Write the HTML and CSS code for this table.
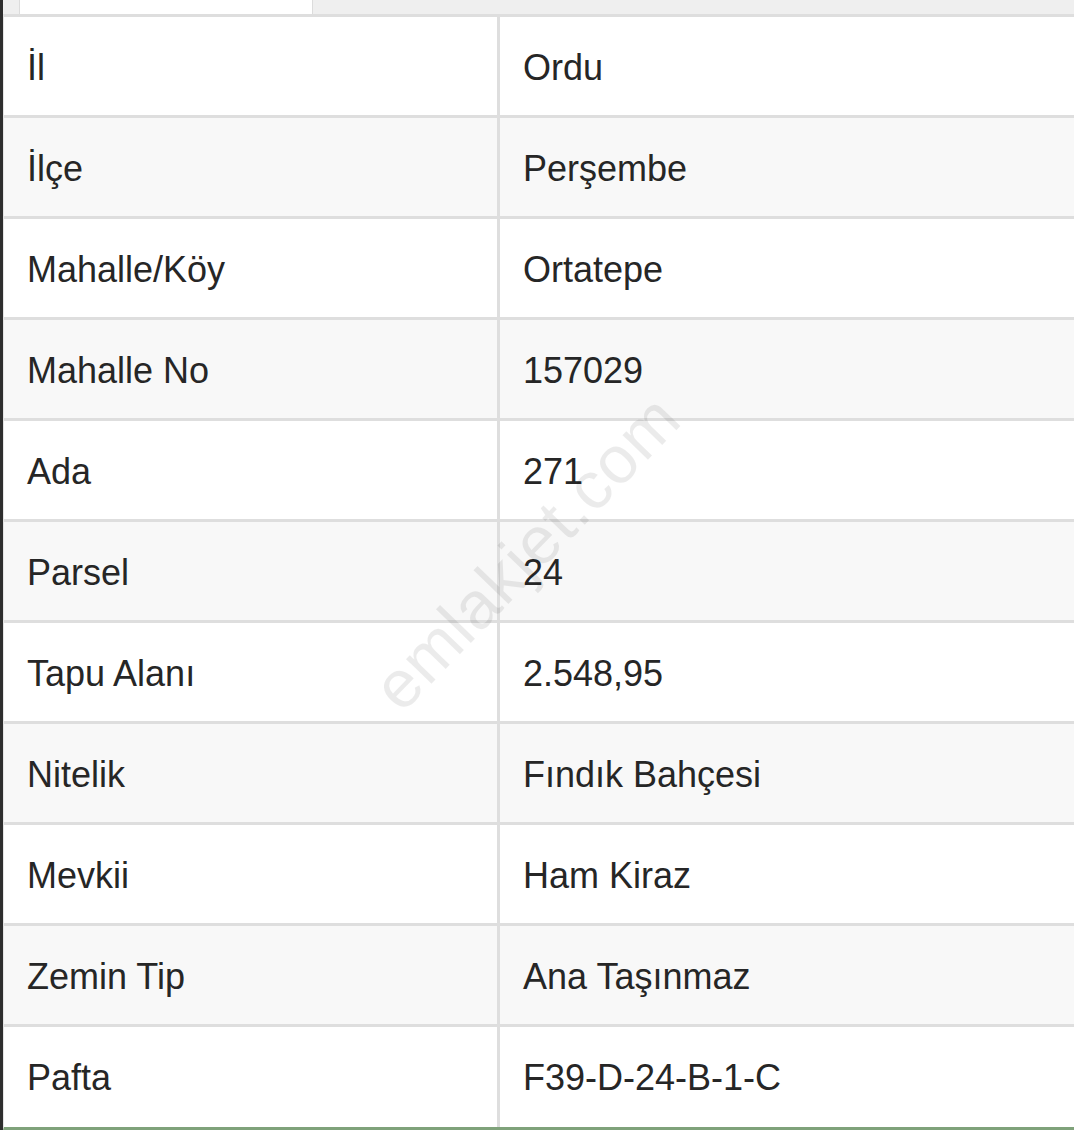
FILE: index.html
```html
<!DOCTYPE html>
<html lang="tr">
<head>
<meta charset="utf-8">
<link rel="stylesheet" href="styles.css">
</head>
<body>
<div class="page">
  <div class="tabs">
    <div class="tab"></div>
  </div>
  <div class="table">
    <div class="row"><div class="cell">İl</div><div class="cell">Ordu</div></div>
    <div class="row"><div class="cell">İlçe</div><div class="cell">Perşembe</div></div>
    <div class="row"><div class="cell">Mahalle/Köy</div><div class="cell">Ortatepe</div></div>
    <div class="row"><div class="cell">Mahalle No</div><div class="cell">157029</div></div>
    <div class="row"><div class="cell">Ada</div><div class="cell">271</div></div>
    <div class="row"><div class="cell">Parsel</div><div class="cell">24</div></div>
    <div class="row"><div class="cell">Tapu Alanı</div><div class="cell">2.548,95</div></div>
    <div class="row"><div class="cell">Nitelik</div><div class="cell">Fındık Bahçesi</div></div>
    <div class="row"><div class="cell">Mevkii</div><div class="cell">Ham Kiraz</div></div>
    <div class="row"><div class="cell">Zemin Tip</div><div class="cell">Ana Taşınmaz</div></div>
    <div class="row last"><div class="cell">Pafta</div><div class="cell">F39-D-24-B-1-C</div></div>
    <div class="watermark">emlakjet.com</div>
  </div>
</div>
</body>
</html>
```

FILE: styles.css
```css
html, body {
  margin: 0;
  padding: 0;
  background: #ffffff;
  overflow: hidden;
}

.page {
  border-left: 3px solid #2e2e2e;
  height: 1130px;
  box-sizing: border-box;
  font-family: "Liberation Sans", Arial, Helvetica, sans-serif;
  color: #262626;
}

.tabs {
  height: 14px;
  background: #efefef;
  display: flex;
  padding-left: 16px;
}

.tab {
  width: 292px;
  background: #ffffff;
  border-left: 1px solid #dcdcdc;
  border-right: 1px solid #dcdcdc;
}

.table {
  position: relative;
  border-top: 3px solid #dedede;
  border-left: 1px solid #e4e4e4;
  border-bottom: 3px solid #7fa27a;
  overflow: hidden;
}

.row {
  display: grid;
  grid-template-columns: 493px 1fr;
  height: 98px;
  border-bottom: 3px solid #dedede;
}

.row.last {
  border-bottom: none;
  height: 100px;
}

.row:nth-child(even) {
  background: #f8f8f8;
}

.cell {
  display: flex;
  align-items: center;
  padding-left: 23px;
  font-size: 36px;
  line-height: 1;
  padding-top: 3px;
  box-sizing: border-box;
}

.cell + .cell {
  border-left: 3px solid #dedede;
  padding-left: 23px;
}

.row.last .cell {
  padding-top: 1px;
}

.watermark {
  position: absolute;
  left: 522px;
  top: 535px;
  transform: translate(-50%, -50%) rotate(-46deg);
  font-size: 67px;
  color: rgba(0, 0, 0, 0.08);
  white-space: nowrap;
  pointer-events: none;
  letter-spacing: 1px;
}
```
